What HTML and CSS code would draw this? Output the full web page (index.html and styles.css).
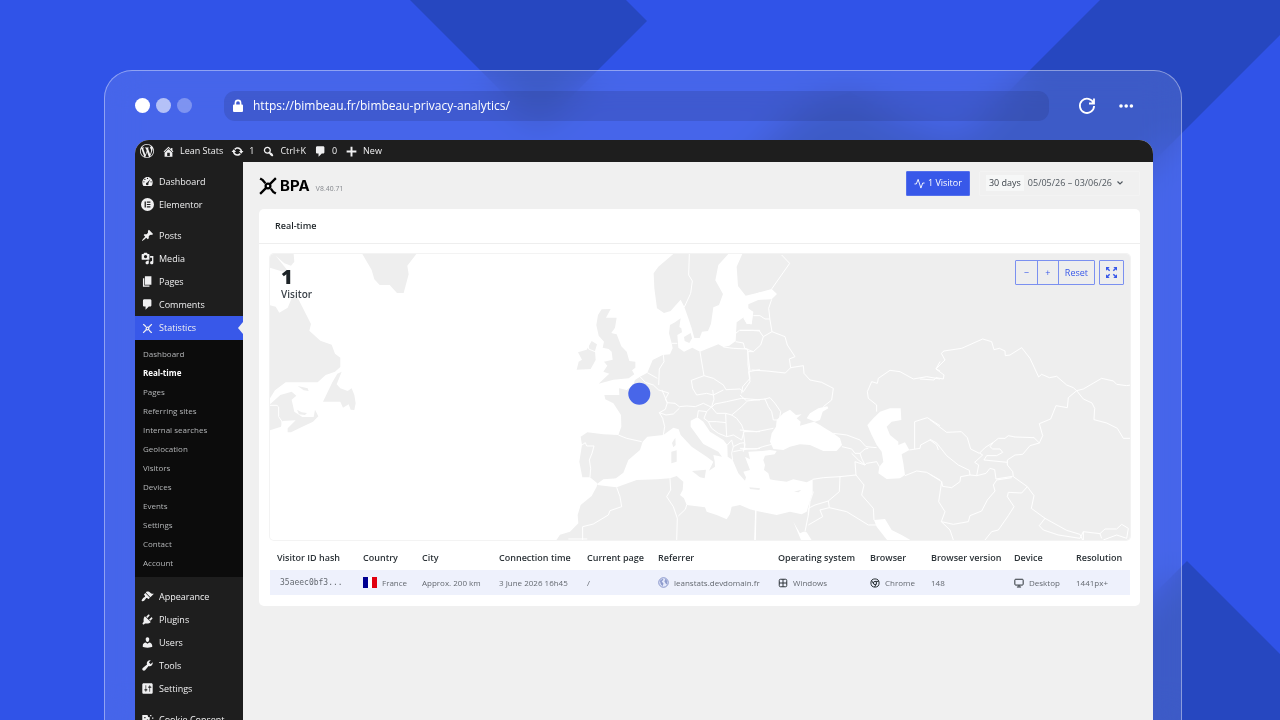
FILE: index.html
```html
<!DOCTYPE html>
<html lang="en">
<head>
<meta charset="utf-8">
<title>Bimbeau Privacy Analytics</title>
<link rel="stylesheet" href="styles.css">
</head>
<body>
<svg class="defs" aria-hidden="true">
  <symbol id="i-wp" viewBox="0 0 20 20"><path d="M20 10c0-5.51-4.49-10-10-10C4.48 0 0 4.49 0 10c0 5.52 4.48 10 10 10 5.51 0 10-4.48 10-10zM7.78 15.37L4.37 6.22c.55-.02 1.17-.08 1.17-.08.5-.06.44-1.13-.06-1.11 0 0-1.45.11-2.37.11-.18 0-.37 0-.58-.01C4.12 2.69 6.87 1.11 10 1.11c2.33 0 4.45.87 6.05 2.34-.68-.11-1.65.39-1.65 1.58 0 .74.45 1.36.9 2.1.35.61.55 1.36.55 2.46 0 1.49-1.4 5-1.4 5l-3.03-8.37c.54-.02.82-.17.82-.17.5-.05.44-1.25-.06-1.22 0 0-1.44.12-2.38.12-.87 0-2.33-.12-2.33-.12-.5-.03-.56 1.2-.06 1.22l.92.08 1.26 3.41zM17.41 10c.24-.64.74-1.87.43-4.25.7 1.29 1.05 2.71 1.05 4.25 0 3.29-1.73 6.24-4.4 7.78.97-2.59 1.94-5.2 2.92-7.78zM6.1 18.09C3.12 16.65 1.11 13.53 1.11 10c0-1.3.23-2.48.72-3.59C3.25 10.3 4.67 14.2 6.1 18.09zm4.03-6.63l2.58 6.98c-.86.29-1.76.45-2.71.45-.79 0-1.57-.11-2.29-.33.81-2.38 1.62-4.74 2.42-7.1z"/></symbol>
  <symbol id="i-home" viewBox="0 0 20 20"><path d="M16 8.500l1.530 1.530-1.060 1.060L10 4.600l-6.470 6.490-1.060-1.060L10 2.500l4 4v-2h2v4zm-6-2.460l6 5.990V18H4v-5.970zM12 17v-5H8v5h4z"/></symbol>
  <symbol id="i-update" viewBox="0 0 20 20"><path d="M10.200 3.280c3.530 0 6.430 2.610 6.920 6h2.080l-3.500 4-3.500-4h2.320c-.45-1.970-2.210-3.450-4.320-3.450-1.450 0-2.730.71-3.540 1.780L4.950 5.660C6.230 4.200 8.110 3.280 10.200 3.280zm-.4 13.440c-3.520 0-6.430-2.610-6.920-6H.8l3.500-4c1.170 1.330 2.330 2.670 3.500 4H5.480c.45 1.970 2.210 3.450 4.320 3.450 1.450 0 2.730-.71 3.540-1.780l1.710 1.950c-1.280 1.460-3.150 2.380-5.250 2.380z"/></symbol>
  <symbol id="i-search" viewBox="0 0 20 20"><path d="M12.140 4.180c1.870 1.870 2.110 4.750.72 6.890.12.1.22.21.36.31.2.16.47.36.81.59.34.24.56.39.66.47.42.31.73.57.94.78.32.32.6.65.84 1 .25.35.44.69.59 1.040.14.35.21.68.18 1-.02.32-.14.59-.36.81s-.49.34-.81.36c-.31.02-.65-.04-.99-.19-.35-.14-.7-.34-1.040-.59-.35-.24-.68-.52-1-.84-.21-.21-.47-.52-.77-.93-.1-.13-.25-.35-.47-.66-.22-.32-.4-.57-.56-.78-.16-.2-.29-.35-.44-.5-2.070 1.090-4.690.76-6.440-.98-2.140-2.150-2.140-5.640 0-7.780 2.150-2.150 5.630-2.150 7.780 0zm-1.410 6.360c1.360-1.370 1.360-3.580 0-4.950-1.370-1.370-3.590-1.370-4.950 0-1.370 1.370-1.370 3.580 0 4.950 1.360 1.370 3.580 1.370 4.950 0z"/></symbol>
  <symbol id="i-comment" viewBox="0 0 20 20"><path d="M5 2h9c1.100 0 2 .9 2 2v7c0 1.100-.9 2-2 2h-2l-5 5v-5H5c-1.100 0-2-.9-2-2V4c0-1.100.9-2 2-2z"/></symbol>
  <symbol id="i-plus" viewBox="0 0 20 20"><path d="M17.500 8.500v3h-6v6h-3v-6h-6v-3h6v-6h3v6z"/></symbol>
  <symbol id="i-dash" viewBox="0 0 20 20"><path fill-rule="evenodd" d="M3.760 17h12.480c1.110-1.520 1.760-3.390 1.760-5.420C18 6.980 14.420 3 10 3S2 6.980 2 11.580c0 2.030.66 3.900 1.760 5.420zM10 4.200a1 1 0 1 1 0 2 1 1 0 1 1 0-2zM6 5.800a1 1 0 1 1 0 2 1 1 0 1 1 0-2zM4.500 9.500a1 1 0 1 1 0 2 1 1 0 1 1 0-2zM15.500 9.500a1 1 0 1 1 0 2 1 1 0 1 1 0-2zM14.500 6l-3.200 6.600a2 2 0 1 1-1.700-.9z"/></symbol>
  <symbol id="i-elem" viewBox="0 0 20 20"><path fill-rule="evenodd" d="M10 0a10 10 0 1 1 0 20 10 10 0 1 1 0-20zM5.500 5.500v9h2v-9zM9 5.500v1.800h5.500V5.500zM9 9.100v1.800h5.500V9.100zM9 12.700v1.800h5.500v-1.800z"/></symbol>
  <symbol id="i-pin" viewBox="0 0 20 20"><path d="M10.440 3.020l1.820-1.820 6.360 6.350-1.830 1.820c-1.050-.68-2.480-.57-3.410.36l-.75.75c-.92.93-1.040 2.350-.35 3.410l-1.830 1.820-2.410-2.410-2.800 2.790c-.42.42-3.380 2.710-3.800 2.290s1.860-3.390 2.280-3.810l2.790-2.790L4.100 9.360l1.830-1.820c1.050.69 2.480.57 3.400-.36l.75-.75c.93-.92 1.050-2.350.36-3.410z"/></symbol>
  <symbol id="i-media" viewBox="0 0 20 20"><path fill-rule="evenodd" d="M13 11V4c0-.55-.45-1-1-1h-1.670L9 1H5L3.670 3H2c-.55 0-1 .45-1 1v7c0 .55.45 1 1 1h10c.55 0 1-.45 1-1zM7 4.500c1.380 0 2.500 1.120 2.500 2.500S8.380 9.500 7 9.500 4.500 8.380 4.500 7 5.620 4.500 7 4.500zM14 6h5v10.500c0 1.380-1.120 2.500-2.500 2.500S14 17.880 14 16.500s1.120-2.500 2.500-2.500c.17 0 .34.02.5.05V9h-3V6zm-4 8.050V13h2v3.500c0 1.380-1.120 2.500-2.500 2.500S7 17.880 7 16.500 8.120 14 9.500 14c.17 0 .34.02.5.05z"/></symbol>
  <symbol id="i-page" viewBox="0 0 20 20"><path d="M6 15V2h10v13H6zm-1 1h8v2H3V5h2v11z"/></symbol>
  <symbol id="i-bpa" viewBox="0 0 24 24"><g fill="none" stroke="currentColor" stroke-width="3"><path d="M1.500 2l3.500 2.200 3.500 4M22.500 1.500l-8 8M9.500 14.500l-8 8M15.800 15.500l3.200 4.300 3.500 2.200"/><circle cx="12" cy="12" r="3.200"/></g></symbol>
  <symbol id="i-brush" viewBox="0 0 20 20"><path d="M14.480 11.060L7.410 3.990l1.500-1.500c.5-.56 2.300-.47 3.510.32 1.210.8 1.430 1.280 2.910 2.100 1.180.64 2.450 1.260 4.450.85zm-.71.71L6.700 4.700 4.930 6.470c-.39.39-.39 1.020 0 1.410l1.060 1.060c.39.39.39 1.030 0 1.420-.6.6-1.430 1.110-2.210 1.690-.35.26-.7.53-1.010.84C1.430 14.230.4 16.080 1.400 17.070c.99 1 2.840-.03 4.180-1.360.31-.31.58-.66.85-1.020.57-.78 1.080-1.610 1.690-2.210.39-.39 1.020-.39 1.410 0l1.060 1.060c.39.39 1.020.39 1.410 0z"/></symbol>
  <symbol id="i-plug" viewBox="0 0 20 20"><path d="M13.110 4.360L9.870 7.600 8 5.730l3.240-3.240c.35-.34 1.050-.2 1.560.32.52.51.66 1.210.31 1.550zm-8 1.770l.91-1.120 9.010 9.010-1.190.84c-.71.71-2.630 1.160-3.820 1.160H6.140L4.900 17.260c-.59.59-1.540.59-2.120 0-.59-.58-.59-1.530 0-2.120l1.240-1.240v-3.880c0-1.130.4-3.190 1.090-3.890zm7.260 3.970l3.240-3.240c.34-.35 1.040-.21 1.550.31.52.51.66 1.210.31 1.550l-3.240 3.250z"/></symbol>
  <symbol id="i-user" viewBox="0 0 20 20"><path d="M10 9.250c-2.270 0-2.730-3.440-2.730-3.440C7 4.020 7.820 2 9.970 2c2.160 0 2.980 2.020 2.710 3.810 0 0-.41 3.440-2.680 3.440zm0 2.570L12.720 10c2.390 0 4.520 2.330 4.520 4.530v2.490s-3.650 1.130-7.240 1.130c-3.650 0-7.240-1.130-7.240-1.130v-2.490c0-2.250 1.940-4.480 4.470-4.480z"/></symbol>
  <symbol id="i-tool" viewBox="0 0 20 20"><path d="M16.680 9.770c-1.340 1.340-3.300 1.670-4.950.99l-5.410 6.520c-.99.99-2.590.99-3.580 0s-.99-2.590 0-3.570l6.520-5.420c-.68-1.650-.35-3.610.99-4.950 1.280-1.280 3.120-1.620 4.720-1.060l-2.890 2.890 2.820 2.820 2.860-2.870c.53 1.580.18 3.390-1.080 4.650z"/></symbol>
  <symbol id="i-set" viewBox="0 0 20 20"><path d="M18 16V4c0-1.100-.9-2-2-2H4c-1.100 0-2 .9-2 2v12c0 1.100.9 2 2 2h12c1.100 0 2-.9 2-2zM8 11h1c.55 0 1 .45 1 1s-.45 1-1 1H8v1.500c0 .28-.22.5-.5.5s-.5-.22-.5-.5V13H6c-.55 0-1-.45-1-1s.45-1 1-1h1V5.500c0-.28.22-.5.5-.5s.5.22.5.5V11zm5-2h-1c-.55 0-1-.45-1-1s.45-1 1-1h1V5.500c0-.28.22-.5.5-.5s.5.22.5.5V7h1c.55 0 1 .45 1 1s-.45 1-1 1h-1v5.500c0 .28-.22.5-.5.5s-.5-.22-.5-.5V9z"/></symbol>
  <symbol id="i-cookie" viewBox="0 0 20 20"><path fill-rule="evenodd" d="M2 3h8l1 3 3 1-1 3 3 3 2 5H2zM5 6v2h2V6zM9 10v2h2v-2zM14 3h2v2h-2zM17 7h2v2h-2z"/></symbol>
</svg>

<div class="stage">
  <svg class="backdrop" viewBox="0 0 1280 720" preserveAspectRatio="xMidYMin slice" aria-hidden="true">
    <path d="M410 0H626L647 21L539 129ZM1100 0H1280V35L1000 315L780 315L710 200L800 110L850 92L905 122L960 140ZM1187 561L1280 654V720H1100V648Z"/>
  </svg>

  <div class="browser">
    <header class="chrome">
      <div class="dots"><i></i><i></i><i></i></div>
      <div class="address">
        <svg viewBox="0 0 12 14" aria-hidden="true"><path fill="#fff" d="M2 5.500h8a1 1 0 0 1 1 1V12a1 1 0 0 1-1 1H2a1 1 0 0 1-1-1V6.500a1 1 0 0 1 1-1z"/><path fill="none" stroke="#fff" stroke-width="1.600" d="M3.400 6V4a2.600 2.600 0 0 1 5.200 0v2"/></svg>
        <span>https://bimbeau.fr/bimbeau-privacy-analytics/</span>
      </div>
      <button class="tool" aria-label="Reload"><svg width="18" height="18" viewBox="0 0 18 18" fill="none" stroke="#fff" stroke-width="1.800"><path d="M15.600 6.200A7.100 7.100 0 1 0 16.100 9M16 1.500v5h-5"/></svg></button>
      <button class="tool" aria-label="More"><svg width="18" height="18" viewBox="0 0 18 18" fill="#fff"><circle cx="4" cy="9" r="1.800"/><circle cx="9.200" cy="9" r="1.800"/><circle cx="14.400" cy="9" r="1.800"/></svg></button>
    </header>

    <div class="screen">
      <nav class="adminbar" aria-label="Toolbar">
        <a href="#" aria-label="WordPress"><svg class="ic wp"><use href="#i-wp"/></svg></a>
        <a href="#"><svg class="ic"><use href="#i-home"/></svg>Lean Stats</a>
        <a href="#"><svg class="ic"><use href="#i-update"/></svg>1</a>
        <a href="#"><svg class="ic"><use href="#i-search"/></svg>Ctrl+K</a>
        <a href="#"><svg class="ic"><use href="#i-comment"/></svg>0</a>
        <a href="#"><svg class="ic"><use href="#i-plus"/></svg>New</a>
      </nav>
      <div class="body">
        <nav class="side" aria-label="Main menu">
          <a href="#"><svg class="ic"><use href="#i-dash"/></svg>Dashboard</a>
          <a href="#"><svg class="ic"><use href="#i-elem"/></svg>Elementor</a>
          <a href="#" class="gap"><svg class="ic"><use href="#i-pin"/></svg>Posts</a>
          <a href="#"><svg class="ic"><use href="#i-media"/></svg>Media</a>
          <a href="#"><svg class="ic"><use href="#i-page"/></svg>Pages</a>
          <a href="#"><svg class="ic"><use href="#i-comment"/></svg>Comments</a>
          <a href="#" class="current"><svg class="ic" viewBox="0 0 26 26"><use href="#i-bpa" x="3" y="3" width="20" height="20"/></svg>Statistics</a>
          <div class="sub">
            <a href="#">Dashboard</a><a href="#" class="on">Real-time</a><a href="#">Pages</a><a href="#">Referring sites</a><a href="#">Internal searches</a><a href="#">Geolocation</a><a href="#">Visitors</a><a href="#">Devices</a><a href="#">Events</a><a href="#">Settings</a><a href="#">Contact</a><a href="#">Account</a>
          </div>
          <a href="#" class="gap"><svg class="ic"><use href="#i-brush"/></svg>Appearance</a>
          <a href="#"><svg class="ic"><use href="#i-plug"/></svg>Plugins</a>
          <a href="#"><svg class="ic"><use href="#i-user"/></svg>Users</a>
          <a href="#"><svg class="ic"><use href="#i-tool"/></svg>Tools</a>
          <a href="#"><svg class="ic"><use href="#i-set"/></svg>Settings</a>
          <a href="#" class="gap"><svg class="ic"><use href="#i-cookie"/></svg>Cookie Consent</a>
        </nav>

        <main class="content">
          <div class="head">
            <div class="brand"><svg><use href="#i-bpa"/></svg><strong>BPA</strong><small>V8.40.71</small></div>
            <button class="live"><svg width="11" height="11" viewBox="0 0 24 24" fill="none" stroke="#fff" stroke-width="2"><path d="M1 13h4L9 3l6 19 4-11h4"/></svg>1 Visitor</button>
            <button class="range"><b>30 days</b><span>05/05/26 – 03/06/26</span><svg width="8" height="8" viewBox="0 0 8 8" fill="none" stroke="#50575e" stroke-width="1.200"><path d="M1.500 2.500L4 5l2.500-2.500"/></svg></button>
          </div>

          <section class="card">
            <h2>Real-time</h2>
            <div class="card-body">
              <div class="map">
                <svg class="world" viewBox="270 254 860 286" role="img" aria-label="Visitor map">
                  <g class="land" transform="translate(255 245) scale(.33333)">
                    <path d="M45 27H116L118 50L108 62L88 55L62 32L96 74L84 80L45 68ZM322 27H484L457 62L461 88L446 144L426 144L404 120H374L358 103L350 75ZM45 181L62 185L73 203L98 188L110 160L128 158L168 237L163 257L196 287L230 299L240 326L256 338V366L240 380L212 390L188 412L92 412L60 436L45 460ZM260 380L247 386L232 412L204 470H256L264 488L281 478L287 494L298 495L302 475L298 450L290 430L278 438L256 430L245 418ZM128 423L158 430L161 438L146 436ZM45 478L76 450L110 440L124 452L110 464L118 500L142 516L176 516L180 494L190 514L174 530L142 545L108 562H98V550L122 526L82 528L78 545L45 556ZM126 494L140 502L156 504L150 510L132 508Z"/>
                    <path class="border" d="M45 481H66L71 486V515L80 528L82 542"/>
                  </g>
                  <g transform="translate(560 245) scale(.33333)">
                    <g class="land">
                      <path d="M340 27L295 65L281 85L283 130L291 190L312 204L332 198L345 183L362 164L373 186L385 220L395 250L403 279H419L426 260L444 258L453 236L460 187L477 180L489 147L466 106L475 60L505 27Z"/>
                      <path d="M547 27L530 65L534 123L557 152L600 142L620 155L600 163L565 178V190L579 200L575 238L560 236L551 217L530 232L527 288L508 302L490 306L475 298L420 320L397 308L372 320L355 308L352 270L366 262L364 250L358 246L362 220L345 232L330 240L327 265L335 295L338 310L330 328L308 330L278 345L262 383L240 395L225 405L220 420L200 435L177 430L178 450L133 450L136 463L160 475L183 510L184 545L175 570L130 568L82 562L62 575L66 600L58 650L67 697H90L112 715L110 725L95 753L62 780L53 810L55 835L30 860L0 869L-14 890H1720V27Z"/>
                      <path d="M125 193L152 192L138 218H170L165 248L154 264L170 268L184 304L200 320L208 348L226 350V368L216 376L223 388L206 400L160 404L116 416L138 395L148 386L130 380L142 362L132 350L158 344L155 320L146 312L128 308L132 290L116 272L109 240L114 210Z"/>
                      <path d="M95 288L111 298L105 318L107 345L92 372L50 374L56 350L66 344L54 322L80 314Z"/>
                      <path d="M372 276L392 264L396 280L388 294L374 288Z"/>
                    </g>
                    <g class="sea">
                      <path transform="translate(0 435)" d="M112 281L130 268L168 265L190 248L205 210L240 180L248 155L262 140L310 135L340 113L356 118L362 135L395 170L440 200L460 215L447 242L465 230L464 213L460 195L486 200L475 185L430 162L392 110V92L412 82L430 95L450 125L490 150L502 165L503 200L518 210L535 250L555 272L558 262L550 245L570 240L555 200L570 208L565 185L608 183L630 180L650 183L644 193L615 197L610 210L615 225L612 240L625 250L630 268L640 270L680 275L700 268L740 277L758 268L758 305L740 365L725 373L690 365L650 375L590 363L570 358L540 345L515 350L510 372L500 388L470 375L440 365L435 352L380 345L372 325L360 315L368 300L370 275L350 258L330 265L290 268L230 270L170 292L112 285Z"/>
                      <g transform="translate(540 0)">
                        <path d="M0 150L22 155L60 142L95 132L111 147L95 163L50 165L24 176V195L40 200L35 238L20 236L10 220L20 180Z"/>
                        <path d="M130 505L150 494L168 510L185 508L170 520L182 530L180 542L222 530L240 540L255 550L280 565L300 580L306 600L290 618H250L210 600L180 598L150 605L130 615L100 612L90 590L95 565L108 545L110 525Z"/>
                        <path d="M200 520L210 505L235 490L262 484L265 490L248 500L240 525L225 530Z"/>
                        <path d="M382 540L400 520L420 500L450 490H482L484 525L455 530L440 545L450 570L475 590V600L495 592L508 615L485 628L490 655L495 690L480 700L440 702L415 685L418 665L430 650L425 620L410 600L395 570Z"/>
                        <path d="M402 825L435 822L455 855L485 870L520 890H445L410 845ZM160 830L180 865L190 860L200 862L218 890H185Z"/>
                      </g>
                    </g>
                    <g class="land">
                      <path d="M346 578L336 594L340 607L347 600ZM334 620L350 616L350 650L334 655ZM396 678L438 674L434 700L420 697ZM568 727L600 730L598 735L570 732ZM702 740L724 734L716 742Z"/>
                    </g>
                    <g class="border">
                      <path d="M388 27L386 90L397 108L392 145L373 186M84 290L86 312L105 320M335 295H352M310 330L312 350L298 372L296 420M262 383L292 400M240 395L256 412L280 420L296 435L326 444L316 462L322 474M420 320L424 345L432 392L460 400L490 420L498 434L540 432L550 440L570 410L566 380L600 374M490 306L520 310L562 312L566 345L570 378M432 392L394 406L398 430L410 450L440 445L460 450L490 435M527 265L538 256H600M527 290L550 294L554 310L580 320"/>
                      <g transform="translate(0 435)"><path d="M175 135L200 145L245 155M66 165L76 158L80 168H102L96 190L88 210L92 235L90 262M310 135L314 110L308 85L298 68L316 58L322 38L345 40L358 50L380 48L406 50L430 40L455 52M298 68L318 75L340 72L358 55M322 38L306 0M412 82L415 62L440 65L455 50L462 28L458 0M440 65L432 85L445 95L470 95L498 98L497 70L470 70L455 52L465 42L500 35L545 25L600 30M445 95L455 115L475 130L500 140L498 98M497 70L515 75L545 50L560 35M515 75L530 85L545 105L552 125H600M500 140L520 135L545 150L552 125M502 165L515 150L520 170L515 190L518 210M520 170L540 160L552 158L555 178L520 185M555 178L600 175M170 292L180 320L185 350L150 362L145 375L100 402L68 410V450M25 447H82M330 265L332 300L320 320L340 350L352 385L350 450M380 345L376 358L355 378M587 360L584 450"/></g>
                      <g transform="translate(540 0)"><path d="M125 30L149 55L95 132M95 163L86 190L90 225L96 260L70 275L62 300L40 320L24 320L24 360L30 400L8 425L5 445M40 212L60 212L75 222L90 222M0 256H35L58 258L70 275M96 260L135 275L142 300L165 335L148 342L152 368L136 384L80 378L35 375M152 368L190 362L192 385L210 405L245 412L280 430L275 465L250 485M0 450L20 468L75 462L85 485L95 500L100 525L118 525L122 500L105 475L90 458L75 462M0 555L50 560L100 550M10 560L15 600L10 620M0 610L50 612L68 605L95 598M280 565L320 570L360 585L378 605L410 608M306 605L335 612L345 625L360 625L375 612L385 610M335 625L355 645L375 660L365 640L360 625M345 650L375 660L380 655L410 650L418 665M345 650L348 690L372 720L365 750L400 790L402 825M218 703L250 698L300 695L348 690M300 695L298 740L265 768L225 780L205 790M265 768L268 788L320 800L385 840L410 840M268 788L240 795L248 815L205 840M205 790L205 810L195 860M220 740L210 770L205 810M48 798L46 885M410 500V480L385 460L382 440L395 410L412 415L415 400L450 376L480 380L520 402L560 395L600 402M524 612V530L562 518L600 542M508 615L540 610L542 600L570 585L590 600L595 615M495 692L530 678L560 682L600 705M600 350L588 372L600 378"/></g>
                      <g transform="translate(1110 0)"><path d="M-30 402L12 405L18 398L40 402L42 390L18 372L45 345L34 325L42 318L95 310L158 282L185 290L192 314L208 310L225 318L226 332L240 330L275 308L300 340L326 396L335 388L358 398L380 394L410 420L430 428L440 437L460 432L515 400L550 408L560 418L590 422L615 418M440 437L415 458L412 488L378 482L362 522L328 536L338 572L328 594L300 602L278 628L255 630L232 645V660L248 680L250 695L292 725L312 752L304 790L345 820L410 856L450 868L458 885M440 437L460 462L486 474L494 490L492 524L530 534L562 550L580 580L605 580M0 524L50 562L94 560L112 578L122 612L148 625L165 608L190 592L205 580H225L235 572L255 576L312 578L328 594M190 592L180 605L188 612L210 612L218 622L200 632H170L162 645L232 652M0 583L20 594L50 632L85 660L118 676L120 690L140 692L146 660L134 652L158 630L150 625M140 692L168 685L180 670L194 674L198 702L248 694M0 688L35 710L38 724L65 728L90 710L92 695L120 690M35 710L26 770L45 800L34 830L70 838L115 830L120 812L155 798L172 765L195 738L190 720L200 705L245 698M34 830L60 855L70 885M292 725L275 744L235 742L232 755L252 785L235 812L205 855L185 860L165 885M345 820L328 842L340 855L385 870L450 880L460 860L510 866L525 852L560 852L575 838L595 850L590 880L560 870L520 885M460 860V885M510 866L515 880"/></g>
                    </g>
                  </g>
                  <circle cx="639.300" cy="393.800" r="11" fill="#4866e9"/>
                </svg>
                <div class="count"><strong>1</strong><span>Visitor</span></div>
                <div class="controls">
                  <div class="group"><button aria-label="Zoom out">−</button><button aria-label="Zoom in">+</button><button>Reset</button></div>
                  <button class="full" aria-label="Full screen"><svg width="11" height="11" viewBox="0 0 12 12" fill="#3858e9" stroke="#3858e9"><path stroke="none" d="M0 0h4L0 4zM12 0v4L8 0zM0 12V8l4 4zM12 12H8l4-4z"/><path fill="none" stroke-width="1.600" d="M1 1l3 3M11 1L8 4M1 11l3-3M11 11L8 8"/></svg></button>
                </div>
              </div>

              <table>
                <colgroup><col class="c86"><col class="c59"><col class="c77"><col class="c88"><col class="c71"><col class="c120"><col class="c92"><col class="c61"><col class="c83"><col class="c62"><col class="c61"></colgroup>
                <thead><tr><th>Visitor ID hash</th><th>Country</th><th>City</th><th>Connection time</th><th>Current page</th><th>Referrer</th><th>Operating system</th><th>Browser</th><th>Browser version</th><th>Device</th><th>Resolution</th></tr></thead>
                <tbody><tr>
                  <td><code>35aeec0bf3...</code></td>
                  <td><span class="cell"><svg class="flag" width="14" height="11" viewBox="0 0 14 11"><path fill="#000091" d="M0 0h5v11H0z"/><path fill="#fff" d="M5 0h4v11H5z"/><path fill="#e1000f" d="M9 0h5v11H9z"/></svg>France</span></td>
                  <td>Approx. 200 km</td>
                  <td>3 June 2026 16h45</td>
                  <td>/</td>
                  <td><span class="cell"><svg width="11" height="11" viewBox="0 0 12 12"><circle cx="6" cy="6" r="5.200" fill="#e4e9fb" stroke="#7d8bc4"/><path fill="#8f9ccd" d="M2 4l3-2 1 1-2 2 2 2-1 3-2-2zM8 2l2 2v4L9 8 7 5z"/></svg>leanstats.devdomain.fr</span></td>
                  <td><span class="cell"><svg width="10" height="10" viewBox="0 0 12 12" fill="none" stroke="#2c3338" stroke-width="1.200"><rect x="1.500" y="1.500" width="9" height="9" rx="1.500"/><path d="M6 1.500v9M1.500 6h9"/></svg>Windows</span></td>
                  <td><span class="cell"><svg width="10" height="10" viewBox="0 0 12 12" fill="none" stroke="#2c3338" stroke-width="1.200"><circle cx="6" cy="6" r="4.900"/><circle cx="6" cy="6" r="1.900"/><path d="M6 4.100h4.500M4.300 7L2 3.200M7.600 7l-2.200 3.900"/></svg>Chrome</span></td>
                  <td>148</td>
                  <td><span class="cell"><svg width="10" height="10" viewBox="0 0 12 12" fill="none" stroke="#2c3338" stroke-width="1.200"><rect x="1" y="1.500" width="10" height="7" rx="1"/><path d="M6 8.500v2M3.500 10.800h5"/></svg>Desktop</span></td>
                  <td>1441px+</td>
                </tr></tbody>
              </table>
            </div>
          </section>
        </main>
      </div>
    </div>
  </div>
</div>
</body>
</html>
```

FILE: styles.css
```css
* { box-sizing: border-box; }
body {
  margin: 0;
  font-family: "Open Sans", "Noto Sans", sans-serif;
  font-size: 9px;
  line-height: 12px;
}
a { color: inherit; text-decoration: none; }
button { font: inherit; margin: 0; padding: 0; border: 0; background: none; color: inherit; cursor: pointer; }
svg { display: block; flex: none; }
.defs { position: absolute; width: 0; height: 0; }

.stage {
  position: relative;
  height: 100vh;
  overflow: hidden;
  background: #3053e8;
  display: flex;
  padding: 70px 98px 0 104px;
}
.backdrop { position: absolute; inset: 0; width: 100%; height: 100%; fill: #2647c0; }

.browser {
  position: relative;
  flex: 1;
  min-width: 0;
  display: flex;
  flex-direction: column;
  padding: 0 28px 0 30px;
  border: 1px solid rgba(255, 255, 255, .4);
  border-bottom: 0;
  border-radius: 28px 28px 0 0;
  background: rgba(255, 255, 255, .11);
  backdrop-filter: blur(18px);
}
.chrome { display: flex; align-items: center; height: 69px; color: #fff; padding-right: 18px; }
.dots { display: flex; gap: 6px; margin-right: 32px; }
.dots i { width: 15px; height: 15px; border-radius: 50%; background: #fff; }
.dots i:nth-child(2) { opacity: .6; }
.dots i:nth-child(3) { opacity: .3; }
.address {
  flex: 1;
  display: flex;
  align-items: center;
  gap: 9px;
  height: 30px;
  margin-right: 27px;
  padding-left: 8px;
  border-radius: 11px;
  background: rgba(40, 55, 130, .25);
  font-size: 12px;
}
.address svg { width: 12px; height: 14px; }
.tool { margin-left: 2px; }
.tool + .tool { margin-left: 21px; }

.screen {
  flex: 1;
  min-height: 0;
  display: flex;
  flex-direction: column;
  overflow: hidden;
  border-radius: 14px 14px 0 0;
  background: #f0f0f0;
}
.ic { width: 13px; height: 13px; fill: currentColor; }
.adminbar {
  flex: none;
  display: flex;
  align-items: center;
  height: 22px;
  padding-left: 5px;
  gap: 8px;
  background: #1e1e1e;
  color: #f0f0f1;
}
.adminbar a { display: flex; align-items: center; gap: 5px; }
.adminbar .wp { width: 14px; height: 14px; }
.body { flex: 1; display: flex; min-height: 0; }

.side { flex: none; width: 108px; padding-top: 8px; background: #1e1e1e; color: #f0f0f1; font-weight: 500; }
.side > a { display: flex; align-items: center; gap: 5px; height: 23px; padding-left: 6px; white-space: nowrap; }
.side > .gap { margin-top: 8px; }
.side > .current { position: relative; height: 24px; background: #3858e9; font-weight: 400; }
.current::after {
  content: "";
  position: absolute;
  right: 0;
  top: 6px;
  border: 6px solid transparent;
  border-left: 0;
  border-right: 5px solid #f0f0f0;
}
.sub { padding: 4px 0 5px; background: #0c0c0c; color: #b4b6b8; font-size: 8px; font-weight: 400; }
.sub a { display: block; height: 19px; line-height: 19px; padding-left: 8px; }
.sub .on { color: #fff; font-weight: 700; }

.content { flex: 1; min-width: 0; padding: 8px 13px 0 16px; }
.head { display: flex; align-items: center; height: 26px; gap: 9px; margin-bottom: 13px; }
.brand { flex: 1; display: flex; align-items: center; gap: 3px; padding-top: 6px; color: #000; }
.brand svg { width: 18px; height: 18px; }
.brand strong { font-family: Inter, sans-serif; font-size: 15px; line-height: 18px; font-weight: 700; }
.brand small { margin-left: 3px; padding-top: 5px; font-family: Roboto, sans-serif; font-size: 7px; line-height: 10px; color: #8c8f94; }
.live { display: flex; align-items: center; gap: 3px; height: 25px; padding: 0 7px; background: #3858e9; border: 1px solid #5470ec; border-radius: 1px; color: #fff; }
.range { display: flex; align-items: center; gap: 4px; height: 25px; padding: 0 15px 0 6px; border: 1px solid #f3f3f3; border-radius: 2px; color: #50575e; }
.range b { padding: 2px 3px; background: #f6f7f7; font-weight: 400; color: #3c434a; }

.card { background: #fff; border-radius: 5px; color: #1d2327; }
.card h2 { margin: 0; padding: 11px 16px 11px; border-bottom: 1px solid #eee; font-size: 9px; line-height: 12px; font-weight: 600; }
.card-body { padding: 10px 10px 11px 11px; }
.map { position: relative; border-radius: 4px; overflow: hidden; box-shadow: 0 0 0 1px #f3f3f3; }
.world { width: 100%; height: auto; }
.land { fill: #eee; }
.sea { fill: #fff; }
.border { fill: none; stroke: #fff; stroke-width: 3; stroke-linejoin: round; }
.count { position: absolute; left: 11px; top: 12px; display: flex; flex-direction: column; font-weight: 600; font-size: 10px; color: #3c434a; }
.count strong { font-size: 20px; line-height: 22px; color: #1d2327; }
.controls { position: absolute; right: 6px; top: 6px; display: flex; gap: 4px; color: #3858e9; }
.group { display: flex; height: 25px; border: 1px solid #7b90f0; border-radius: 1px; }
.group button { min-width: 21px; padding: 0 6px; }
.group button + button { border-left: 1px solid #7b90f0; }
.full { display: grid; place-items: center; width: 25px; height: 25px; border: 1px solid #7b90f0; border-radius: 1px; }

table { width: 100%; table-layout: fixed; border-collapse: collapse; margin-top: 5px; }
th, td { padding: 0 0 0 7px; text-align: left; white-space: nowrap; height: 25px; }
th { font-weight: 600; color: #2c3338; }
td { background: #eef1fc; color: #646970; font-size: 8px; }
td code { padding-left: 3px; font-family: "DejaVu Sans Mono", monospace; font-size: 8px; line-height: 12px; }
.cell { display: flex; align-items: center; gap: 5px; }
.c86 { width: 86px; }
.c59 { width: 59px; }
.c77 { width: 77px; }
.c88 { width: 88px; }
.c71 { width: 71px; }
.c120 { width: 120px; }
.c92 { width: 92px; }
.c61 { width: 61px; }
.c83 { width: 83px; }
.c62 { width: 62px; }
```
